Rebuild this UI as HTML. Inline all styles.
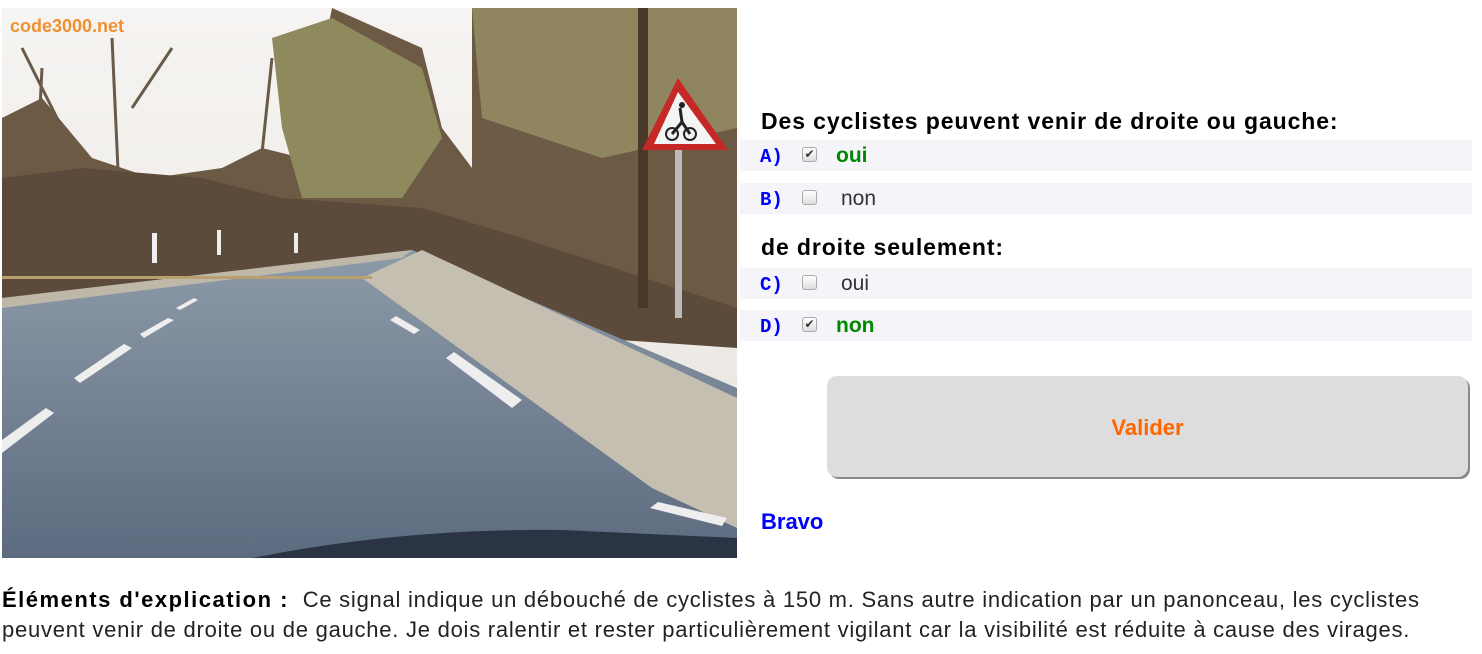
<!DOCTYPE html>
<html><head><meta charset="utf-8"><style>
body{margin:0;width:1482px;height:654px;background:#fff;font-family:"Liberation Sans",sans-serif;position:relative;overflow:hidden}
.abs{position:absolute}
.q{left:761px;font-weight:bold;font-size:23px;letter-spacing:0.9px;color:#000}
.row{left:740px;width:732px;height:31px;background:#f4f4f9}
.lt{position:absolute;left:20px;top:6px;font-family:"Liberation Mono",monospace;font-weight:bold;color:#00f;font-size:19px}
.cb{position:absolute;left:62px;top:7px;width:13px;height:13px;border:1px solid #aaa;border-radius:3px;background:linear-gradient(#fff,#ddd);font-size:12px;line-height:13px;text-align:center;color:#333}
.ans{position:absolute;left:96px;top:4px;font-size:21px}
.ok{color:#080;font-weight:bold}
.no{color:#333;left:101px}
</style></head><body>
<svg class="abs" style="left:2px;top:8px" width="735" height="550" viewBox="0 0 735 550">
<defs><linearGradient id="sky" x1="0" y1="0" x2="0" y2="1"><stop offset="0" stop-color="#f6f4f2"/><stop offset="1" stop-color="#e8e4de"/></linearGradient>
<linearGradient id="rd" x1="0" y1="0" x2="0" y2="1"><stop offset="0" stop-color="#8d9aa8"/><stop offset="1" stop-color="#5d6b80"/></linearGradient></defs>
<rect width="735" height="550" fill="url(#sky)"/>
<path d="M0 110 L40 90 L90 150 L150 170 L220 160 L260 140 L300 150 L330 0 L420 40 L440 120 L470 160 L470 0 L735 0 L735 330 L420 260 L0 290 Z" fill="#6c5a44"/>
<path d="M270 30 L330 10 L420 60 L440 130 L400 190 L300 190 L280 120 Z" fill="#8f8a5e"/>
<path d="M470 0 L735 0 L735 120 L600 150 L480 110 Z" fill="#8f8660"/>
<g stroke="#6a5a4a" stroke-width="3" fill="none"><path d="M30 260 L40 60 M120 250 L110 30 M60 120 L20 40 M130 100 L170 40 M250 240 L270 50"/></g>
<path d="M0 170 L80 160 L200 170 L280 190 L420 200 L520 230 L735 300 L735 340 L0 290 Z" fill="#5c4a3a"/>
<path d="M0 290 L410 242 L735 380 L735 550 L0 550 Z" fill="url(#rd)"/>
<path d="M360 270 L420 242 L480 270 L735 390 L735 520 L650 480 Z" fill="#c4bfb0"/>
<path d="M0 290 L410 242 L400 250 L0 300 Z" fill="#bfb8a8"/>
<rect x="0" y="268" width="370" height="3" fill="#b8a070"/>
<g fill="#eee"><path d="M0 445 L52 405 L44 400 L0 432Z"/><path d="M78 375 L130 340 L122 336 L72 370Z"/><path d="M142 330 L172 312 L166 310 L138 326Z"/><path d="M178 302 L196 292 L192 290 L174 300Z"/><path d="M444 350 L510 400 L520 392 L452 344Z"/><path d="M388 312 L412 326 L418 322 L394 308Z"/><path d="M648 500 L720 518 L725 510 L656 494Z"/></g>
<g fill="#eee"><rect x="150" y="225" width="5" height="30"/><rect x="215" y="222" width="4" height="25"/><rect x="292" y="225" width="4" height="20"/></g>
<rect x="673" y="140" width="7" height="170" fill="#bbb"/>
<rect x="636" y="0" width="10" height="300" fill="#4a3828"/>
<path d="M676 70 L726 142 L640 142 Z" fill="#c62828"/>
<path d="M676 84 L714 136 L652 136 Z" fill="#f4f4f4"/>
<circle cx="670" cy="126" r="6" fill="none" stroke="#222" stroke-width="2"/><circle cx="688" cy="126" r="6" fill="none" stroke="#222" stroke-width="2"/><path d="M670 126 L680 114 L688 126 M678 100 L680 114" stroke="#222" stroke-width="3" fill="none"/><circle cx="680" cy="97" r="3" fill="#222"/>
<path d="M250 550 Q400 520 560 522 L735 530 L735 550 Z" fill="#2a3444"/>
<text x="8" y="24" font-family="Liberation Sans" font-weight="bold" font-size="18" fill="#f09030">code3000.net</text>
</svg>
<div class="abs q" style="top:108px">Des cyclistes peuvent venir de droite ou gauche:</div>
<div class="abs row" style="top:140px"><span class="lt">A)</span><span class="cb">✔</span><span class="ans ok">oui</span></div>
<div class="abs row" style="top:183px"><span class="lt">B)</span><span class="cb"></span><span class="ans no">non</span></div>
<div class="abs q" style="top:234px">de droite seulement:</div>
<div class="abs row" style="top:268px"><span class="lt">C)</span><span class="cb"></span><span class="ans no">oui</span></div>
<div class="abs row" style="top:310px"><span class="lt">D)</span><span class="cb">✔</span><span class="ans ok">non</span></div>
<div class="abs" style="left:827px;top:376px;width:641px;height:101px;background:#ddd;border-radius:10px;box-shadow:2px 2px 0 #888;text-align:center;line-height:103px;color:#f60;font-weight:bold;font-size:22px">Valider</div>
<div class="abs" style="left:761px;top:509px;color:#00f;font-weight:bold;font-size:22px">Bravo</div>
<div class="abs" style="left:2px;top:585px;width:1440px;font-size:22px;letter-spacing:0.75px;line-height:30px;color:#222"><b style="color:#000;font-size:22px;letter-spacing:1.5px">Éléments d'explication :</b>&nbsp; Ce signal indique un débouché de cyclistes à 150 m. Sans autre indication par un panonceau, les cyclistes peuvent venir de droite ou de gauche. Je dois ralentir et rester particulièrement vigilant car la visibilité est réduite à cause des virages.</div>
</body></html>
